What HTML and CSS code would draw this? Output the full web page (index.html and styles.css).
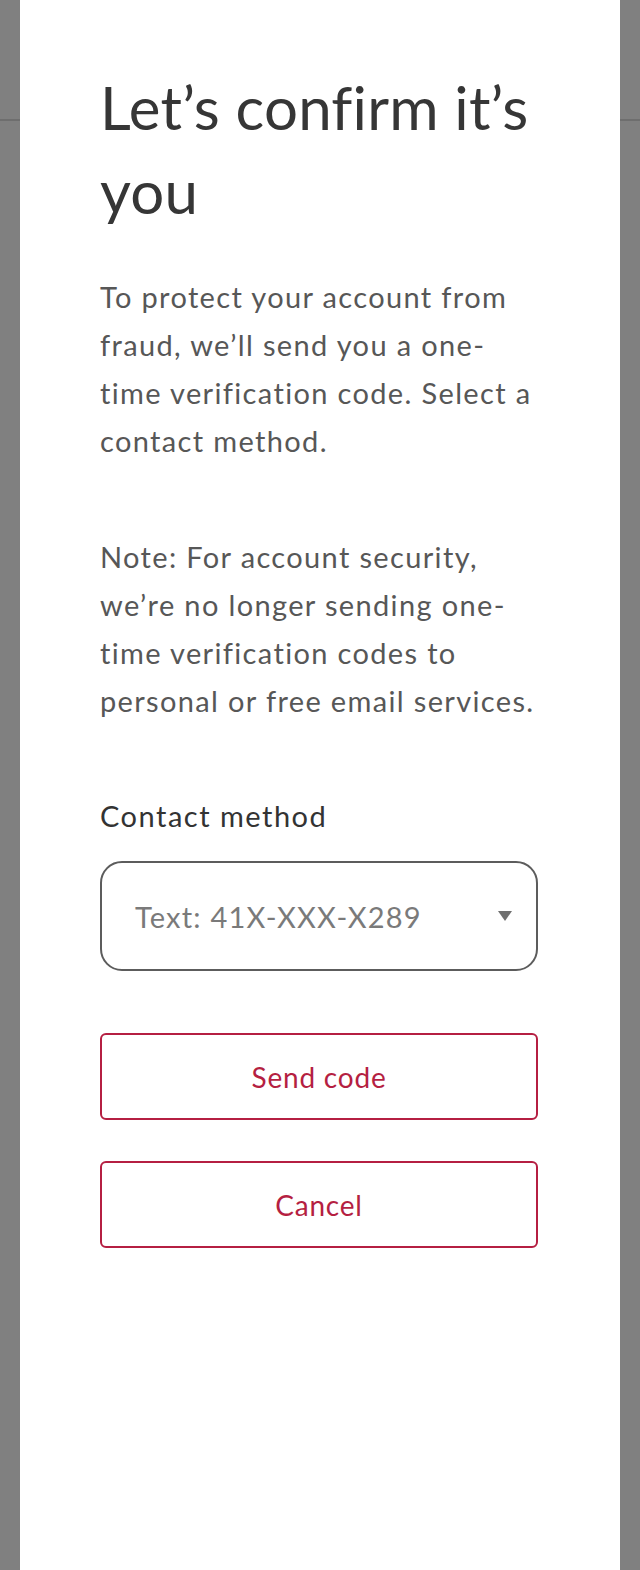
FILE: index.html
```html
<!DOCTYPE html>
<html lang="en">
<head>
<meta charset="utf-8">
<title>Let's confirm it's you</title>
<link rel="stylesheet" href="styles.css">
</head>
<body>
<div class="page-header"></div>
<div class="modal" role="dialog" aria-labelledby="title">
  <h1 id="title" class="title">Let’s confirm it’s you</h1>
  <p class="text">To protect your account from fraud, we’ll send you a one-time verification code. Select a contact method.</p>
  <p class="text">Note: For account security, we’re no longer sending one-time verification codes to personal or free email services.</p>
  <label class="label" for="method">Contact method</label>
  <div class="select" id="method">
    <span class="select-value">Text: 41X-XXX-X289</span>
    <span class="caret"></span>
  </div>
  <button class="btn">Send code</button>
  <button class="btn">Cancel</button>
</div>
</body>
</html>
```

FILE: styles.css
```css
html, body {
  margin: 0;
  padding: 0;
}
body {
  background: #808080;
  min-height: 1570px;
  font-family: Lato, "Noto Sans", sans-serif;
}
.page-header {
  height: 119px;
  border-bottom: 2px solid #6e6e6e;
}
.modal {
  position: absolute;
  top: 0;
  left: 20px;
  width: 600px;
  height: 1570px;
  box-sizing: border-box;
  background: #fff;
  padding: 65px 82px 0 80px;
  display: flex;
  flex-direction: column;
}
.title {
  margin: 0 0 40px;
  font-weight: 400;
  font-size: 60px;
  line-height: 84px;
  letter-spacing: 0.2px;
  color: #363636;
}
.text {
  margin: 0 -2px 68px 0;
  font-size: 29px;
  line-height: 48px;
  letter-spacing: 1.35px;
  color: #575757;
  font-weight: 400;
}
.label {
  margin-top: 3px;
  font-size: 29px;
  line-height: 40px;
  letter-spacing: 1.5px;
  color: #333;
}
.select {
  margin-top: 25px;
  height: 110px;
  box-sizing: border-box;
  border: 2px solid #5c5c5c;
  border-radius: 22px;
  display: flex;
  align-items: center;
  justify-content: space-between;
  padding: 0 24px 0 33px;
}
.select-value {
  font-size: 29px;
  letter-spacing: 1.2px;
  color: #7a7a7a;
}
.caret {
  width: 0;
  height: 0;
  border-left: 7px solid transparent;
  border-right: 7px solid transparent;
  border-top: 10px solid #707070;
}
.btn {
  margin-top: 62px;
  height: 87px;
  background: #fff;
  border: 2px solid #b51f42;
  border-radius: 6px;
  font-family: Lato, "Noto Sans", sans-serif;
  font-size: 28px;
  letter-spacing: 0.8px;
  color: #b51f42;
}
.btn + .btn {
  margin-top: 41px;
}
```
